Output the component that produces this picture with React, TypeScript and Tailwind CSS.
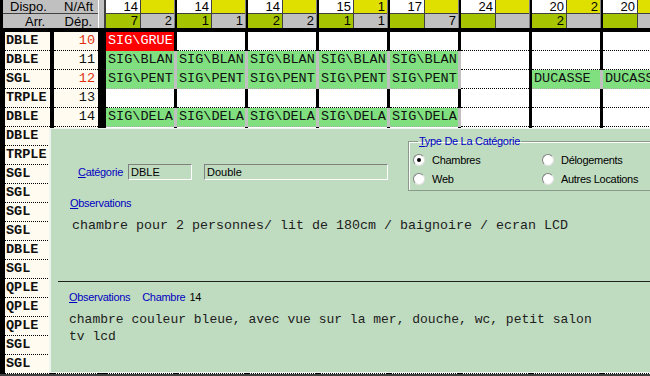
import React from 'react';

type Cell = { t: string; c: 'g' | 'r' } | null;

const G = (t: string): Cell => ({ t, c: 'g' });
const E: Cell = null;

const days = [
  { top: '14', y: '', o: '7', g: '2' },
  { top: '14', y: '', o: '1', g: '1' },
  { top: '14', y: '', o: '2', g: '2' },
  { top: '15', y: '1', o: '1', g: '1' },
  { top: '17', y: '', o: '', g: '7' },
  { top: '24', y: '', o: '', g: '' },
  { top: '20', y: '2', o: '2', g: '' },
  { top: '20', y: '', o: '', g: '' },
];

const empty: Cell[] = [E, E, E, E, E, E, E, E];

const rows: { type: string; num?: string; red?: boolean; cells: Cell[] }[] = [
  { type: 'DBLE', num: '10', red: true, cells: [{ t: 'SIG\\GRUE', c: 'r' }, E, E, E, E, E, E, E] },
  { type: 'DBLE', num: '11', cells: [G('SIG\\BLAN'), G('SIG\\BLAN'), G('SIG\\BLAN'), G('SIG\\BLAN'), G('SIG\\BLAN'), E, E, E] },
  { type: 'SGL', num: '12', red: true, cells: [G('SIG\\PENT'), G('SIG\\PENT'), G('SIG\\PENT'), G('SIG\\PENT'), G('SIG\\PENT'), E, G('DUCASSE'), G('DUCASSE')] },
  { type: 'TRPLE', num: '13', cells: empty },
  { type: 'DBLE', num: '14', cells: [G('SIG\\DELA'), G('SIG\\DELA'), G('SIG\\DELA'), G('SIG\\DELA'), G('SIG\\DELA'), E, E, E] },
  { type: 'DBLE', cells: empty },
  { type: 'TRPLE', cells: empty },
  { type: 'SGL', cells: empty },
  { type: 'SGL', cells: empty },
  { type: 'SGL', cells: empty },
  { type: 'SGL', cells: empty },
  { type: 'DBLE', cells: empty },
  { type: 'SGL', cells: empty },
  { type: 'QPLE', cells: empty },
  { type: 'QPLE', cells: empty },
  { type: 'QPLE', cells: empty },
  { type: 'SGL', cells: empty },
  { type: 'SGL', cells: empty },
];

const Radio = ({ label, checked }: { label: string; checked?: boolean }) => (
  <div className="flex h-[14px] items-center whitespace-nowrap">
    <span className="flex h-[12px] w-[12px] shrink-0 items-center justify-center rounded-full border border-t-[#808080] border-l-[#808080] border-b-[#e0e0e0] border-r-[#e0e0e0] bg-white">
      {checked && <span className="h-[4px] w-[4px] rounded-full bg-black" />}
    </span>
    <span className="ml-[7px] text-black">{label}</span>
  </div>
);

const App: React.FC = () => {
  return (
    <div className="relative h-[376px] w-[650px] overflow-hidden bg-[#404040] font-['Liberation_Mono','Courier_New',monospace] text-[13.5px] text-[#101010]">
      {/* header */}
      <div className="flex h-[28px] bg-[#c0c0c0] font-['Liberation_Sans',Arial,sans-serif] text-[13px] leading-[13px] text-black">
        <div className="flex w-[98px] shrink-0 flex-col border-l-[3px] border-black">
          <div className="flex h-[14px] items-end justify-between border-b border-[#404040] pl-[7px] pr-[5px]">
            <span>Dispo.</span>
            <span>N/Aft</span>
          </div>
          <div className="flex h-[14px] items-end justify-between pl-[22px] pr-[6px]">
            <span>Arr.</span>
            <span>Dép.</span>
          </div>
        </div>
        <div className="w-[8px] shrink-0 border-l border-r-2 border-l-white border-r-[#404040] bg-[#c0c0c0]" />
        {days.map((d, i) => (
          <div key={i} className="flex w-[71px] shrink-0">
            <div className="flex flex-1 flex-col text-[13px] leading-[13px]">
              <div className="flex h-[14px] border-b border-[#404040]">
                <div className="w-[34px] bg-white pr-[2px] text-right">{d.top}</div>
                <div className="w-px bg-[#404040]" />
                <div className="flex-1 bg-[#e0e000] pr-[2px] text-right">{d.y}</div>
              </div>
              <div className="flex h-[14px]">
                <div className="w-[34px] bg-[#a6c400] pr-[2px] text-right">{d.o}</div>
                <div className="w-px bg-[#404040]" />
                <div className="flex-1 bg-[#c0c0c0] pr-[2px] text-right">{d.g}</div>
              </div>
            </div>
            <div className="w-[3px] border-l border-[#808080] bg-black" />
          </div>
        ))}
      </div>
      <div className="h-[4px] bg-black" />

      {/* rows */}
      {rows.map((r, i) => (
        <div key={i} className="flex h-[19px]">
          <div className="w-[5px] shrink-0 bg-black" />
          <div className="flex w-[45px] shrink-0 items-center border-b border-dotted border-black bg-[#fffbf0] pl-px font-bold">
            {r.type}
          </div>
          <div className="w-[4px] shrink-0 bg-black" />
          <div
            className={`flex w-[44px] shrink-0 items-center justify-end border-b border-dotted border-black bg-[#fffbf0] pr-[3px] ${
              r.red ? 'text-[#e03010]' : 'text-[#101010]'
            }`}
          >
            {r.num}
          </div>
          <div className="w-[8px] shrink-0 bg-black" />
          {r.cells.map((c, j) => (
            <div key={j} className="flex w-[71px] shrink-0">
              <div
                className={`flex flex-1 items-center overflow-hidden whitespace-nowrap border-b border-dotted pl-[2px] ${
                  c?.c === 'g'
                    ? 'border-[#b0b0b0] bg-[#80e080]'
                    : c?.c === 'r'
                      ? 'border-[#ff0000] bg-[#ff0000] text-white'
                      : 'border-black bg-white'
                }`}
              >
                {c?.t}
              </div>
              <div className={`w-[3px] ${c?.c === 'g' ? 'bg-[#c0c0c0]' : 'bg-black'}`} />
            </div>
          ))}
        </div>
      ))}

      {/* detail panel over the grid */}
      <div className="absolute left-[49px] top-[128px] h-[245px] w-[601px] border-b border-l-2 border-t border-[#eef4ee] bg-[#c0dcc0] font-['Liberation_Sans',Arial,sans-serif] text-[11px] leading-[14px] tracking-[-0.3px]">
        <div className="flex items-start">
          <div className="w-[357px] shrink-0 pl-[27px] pt-[35px]">
            <div className="flex h-[16px] items-center whitespace-nowrap">
              <span className="w-[50px] text-[#0000c0]">
                <span className="underline">C</span>atégorie
              </span>
              <div className="flex h-[16px] w-[64px] items-center border border-b-white border-l-[#808080] border-r-white border-t-[#808080] pl-[2px] tracking-normal text-black">
                DBLE
              </div>
              <div className="ml-[12px] flex h-[16px] w-[184px] items-center border border-b-white border-l-[#808080] border-r-white border-t-[#808080] pl-[2px] tracking-normal text-black">
                Double
              </div>
            </div>
          </div>
          <fieldset className="mt-[5px] flex-1 border border-r-0 border-[#8a9a8a] pb-[4px] pl-[4px] pt-[5px] shadow-[inset_1px_1px_0_#ffffff]">
            <legend className="ml-[5px] whitespace-nowrap px-px leading-[14px] text-[#0000c0]">
              <span className="underline">T</span>ype De La Catégorie
            </legend>
            <div className="grid grid-cols-[129px_1fr] gap-y-[5px]">
              <Radio label="Chambres" checked />
              <Radio label="Délogements" />
              <Radio label="Web" />
              <Radio label="Autres Locations" />
            </div>
          </fieldset>
        </div>

        <div className="mt-[5px] pl-[19px] text-[#0000c0]">
          <span className="underline">O</span>bservations
        </div>
        <div className="mt-[8px] whitespace-nowrap pl-[21px] font-['Liberation_Mono','Courier_New',monospace] text-[13.33px] leading-[16px] tracking-normal text-[#202020]">
          chambre pour 2 personnes/ lit de 180cm / baignoire / ecran LCD
        </div>

        <div className="ml-[7px] mt-[47px] h-px bg-[#202020]" />

        <div className="mt-[8px] flex whitespace-nowrap pl-[18px]">
          <span className="text-[#0000c0]">
            <span className="underline">O</span>bservations
          </span>
          <span className="ml-[12px] text-[#0000c0]">Chambre</span>
          <span className="ml-[4px] text-black">14</span>
        </div>
        <div className="mt-[7px] pl-[18px] font-['Liberation_Mono','Courier_New',monospace] text-[13px] leading-[17px] tracking-normal text-[#202020]">
          <div className="whitespace-nowrap">chambre couleur bleue, avec vue sur la mer, douche, wc, petit salon</div>
          <div>tv lcd</div>
        </div>
      </div>
    </div>
  );
};

export default App;
